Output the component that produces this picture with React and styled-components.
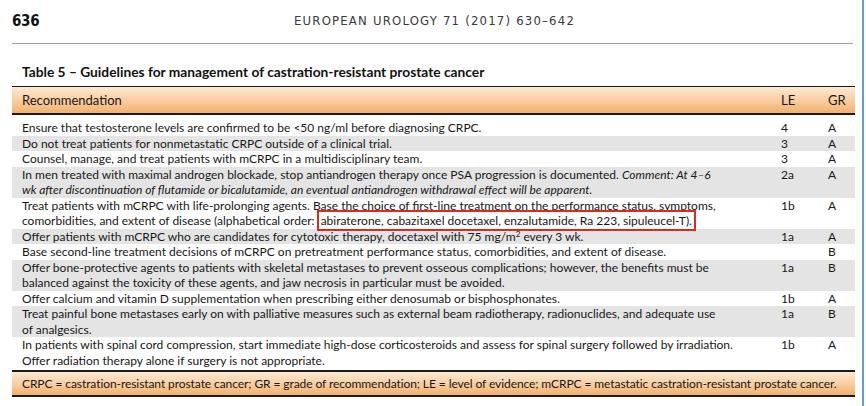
import React from 'react'
import styled, { createGlobalStyle } from 'styled-components'

const GlobalStyle = createGlobalStyle`
  html, body {
    margin: 0;
    padding: 0;
    background: #fff;
  }
  body {
    font-family: 'Lato', 'Open Sans', sans-serif;
    color: #181818;
  }
`

const Page = styled.div`
  width: 860px;
  height: 406px;
  overflow: hidden;
  border-right: 2px solid #5f9fd3;
  padding-right: 2px;
  box-sizing: content-box;
`

const RunningHead = styled.header`
  display: grid;
  grid-template-columns: 1fr auto 1fr;
  align-items: center;
  margin: 0 7px 0 12px;
  padding-top: 11px;
  padding-bottom: 12px;
  height: 20px;
  line-height: 20px;
  border-bottom: 1.5px solid #a3a3a3;
  box-sizing: content-box;
`

const PageNumber = styled.span`
  font-family: 'DejaVu Sans Condensed', 'Liberation Sans Narrow', 'Roboto', sans-serif;
  font-weight: 700;
  font-size: 15px;
  letter-spacing: -0.3px;
  color: #111;
`

const Journal = styled.span`
  margin-left: 4px;
  font-family: 'DejaVu Sans Condensed', 'Liberation Sans Narrow', 'Roboto', sans-serif;
  font-weight: 300;
  font-size: 13px;
  letter-spacing: 1.2px;
  color: #3a3a3a;
`

const Caption = styled.h3`
  margin: 20px 0 0 22px;
  font-family: 'Lato', 'Open Sans', sans-serif;
  font-weight: 700;
  font-size: 13.75px;
  line-height: 16px;
  color: #111;
`

const Table = styled.section`
  margin: 6px 5px 0 12px;
`

const Band = styled.div`
  display: grid;
  grid-template-columns: 1fr 47px 27px;
  align-items: center;
  height: 26px;
  padding-left: 10px;
  border-top: 1.5px solid #1a1a1a;
  border-bottom: 2px solid #1a1a1a;
  background: linear-gradient(#fde9d3, #f8cc9d 55%, #f2b06d);
  font-size: 13px;
`

const Body = styled.div`
  padding-top: 5px;
  font-size: 12px;
  line-height: 15.5px;
`

const Row = styled.div`
  display: grid;
  grid-template-columns: 1fr 47px 27px;
  padding-left: 10px;
  background: ${(p) => (p.$shaded ? '#e4e4e4' : 'transparent')};
  sup {
    font-size: 8px;
    line-height: 0;
    vertical-align: 4px;
  }
`

const Cell = styled.div`
  white-space: nowrap;
`

const Line = styled.div``

const Marked = styled.span`
  margin-left: 2px;
  padding: 1px 2px 1px 2px;
  border: 2px solid #dc2a1e;
`

const Footnote = styled.div`
  margin-top: 2px;
  height: 23px;
  line-height: 23px;
  padding-left: 10px;
  border-top: 2px solid #1a1a1a;
  border-bottom: 2px solid #1a1a1a;
  background: linear-gradient(#fde9d3, #f8cc9d 55%, #f2b06d);
  font-size: 12px;
  letter-spacing: -0.08px;
  white-space: nowrap;
`

// rows of the guideline table; lines are broken as in the printed page
const rows = [
  { id: 1, lines: ['Ensure that testosterone levels are confirmed to be <50 ng/ml before diagnosing CRPC.'], le: '4', gr: 'A' },
  { id: 2, lines: ['Do not treat patients for nonmetastatic CRPC outside of a clinical trial.'], le: '3', gr: 'A' },
  { id: 3, lines: ['Counsel, manage, and treat patients with mCRPC in a multidisciplinary team.'], le: '3', gr: 'A' },
  {
    id: 4,
    lines: [
      <>
        In men treated with maximal androgen blockade, stop antiandrogen therapy once PSA progression is documented.{' '}
        <em>Comment: At 4–6</em>
      </>,
      <em>wk after discontinuation of flutamide or bicalutamide, an eventual antiandrogen withdrawal effect will be apparent.</em>,
    ],
    le: '2a',
    gr: 'A',
  },
  {
    id: 5,
    lines: [
      'Treat patients with mCRPC with life-prolonging agents. Base the choice of first-line treatment on the performance status, symptoms,',
      <>
        comorbidities, and extent of disease (alphabetical order:
        <Marked>abiraterone, cabazitaxel docetaxel, enzalutamide, Ra 223, sipuleucel-T).</Marked>
      </>,
    ],
    le: '1b',
    gr: 'A',
  },
  {
    id: 6,
    lines: [
      <>
        Offer patients with mCRPC who are candidates for cytotoxic therapy, docetaxel with 75 mg/m<sup>2</sup> every 3 wk.
      </>,
    ],
    le: '1a',
    gr: 'A',
  },
  { id: 7, lines: ['Base second-line treatment decisions of mCRPC on pretreatment performance status, comorbidities, and extent of disease.'], le: '', gr: 'B' },
  {
    id: 8,
    lines: [
      'Offer bone-protective agents to patients with skeletal metastases to prevent osseous complications; however, the benefits must be',
      'balanced against the toxicity of these agents, and jaw necrosis in particular must be avoided.',
    ],
    le: '1a',
    gr: 'B',
  },
  { id: 9, lines: ['Offer calcium and vitamin D supplementation when prescribing either denosumab or bisphosphonates.'], le: '1b', gr: 'A' },
  {
    id: 10,
    lines: [
      'Treat painful bone metastases early on with palliative measures such as external beam radiotherapy, radionuclides, and adequate use',
      'of analgesics.',
    ],
    le: '1a',
    gr: 'B',
  },
  {
    id: 11,
    lines: [
      'In patients with spinal cord compression, start immediate high-dose corticosteroids and assess for spinal surgery followed by irradiation.',
      'Offer radiation therapy alone if surgery is not appropriate.',
    ],
    le: '1b',
    gr: 'A',
  },
]

const App = () => {
  return (
    <Page>
      <GlobalStyle />
      <RunningHead>
        <PageNumber>636</PageNumber>
        <Journal>EUROPEAN UROLOGY 71 (2017) 630–642</Journal>
        <span />
      </RunningHead>

      <Caption>Table 5 – Guidelines for management of castration-resistant prostate cancer</Caption>

      <Table>
        <Band>
          <Cell>Recommendation</Cell>
          <Cell>LE</Cell>
          <Cell>GR</Cell>
        </Band>
        <Body>
          {rows.map((row, i) => (
            <Row key={row.id} $shaded={i % 2 === 1}>
              <Cell>
                {row.lines.map((line, j) => (
                  <Line key={j}>{line}</Line>
                ))}
              </Cell>
              <Cell>{row.le}</Cell>
              <Cell>{row.gr}</Cell>
            </Row>
          ))}
        </Body>
        <Footnote>
          CRPC = castration-resistant prostate cancer; GR = grade of recommendation; LE = level of evidence; mCRPC = metastatic
          castration-resistant prostate cancer.
        </Footnote>
      </Table>
    </Page>
  )
}

export default App
